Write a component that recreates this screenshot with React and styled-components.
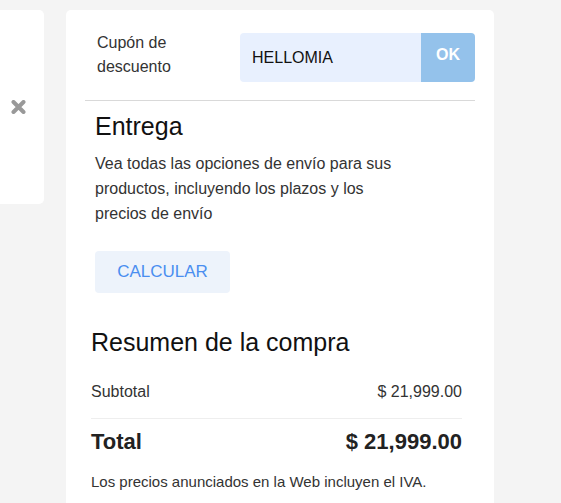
import React from "react"
import styled, { createGlobalStyle } from "styled-components"

const GlobalStyle = createGlobalStyle`
  html, body {
    margin: 0;
    padding: 0;
    overflow: hidden;
    background: #f4f4f4;
    font-family: "Liberation Sans", Arial, sans-serif;
  }
`

const Page = styled.div`
  display: flex;
  align-items: flex-start;
  gap: 22px;
  padding-top: 10px;
`

const SideCard = styled.div`
  width: 44px;
  height: 194px;
  background: #fff;
  border-radius: 0 5px 5px 0;
  display: flex;
  align-items: center;
  padding-left: 11px;
  box-sizing: border-box;
`

const Card = styled.div`
  width: 428px;
  background: #fff;
  border-radius: 5px 5px 0 0;
  padding: 23px 19px 20px;
  box-sizing: border-box;
  color: #333;
`

const CouponRow = styled.div`
  display: flex;
  align-items: flex-start;
  padding-left: 12px;
  padding-bottom: 18px;
  border-bottom: 1px solid #d9d9d9;
`

const CouponLabel = styled.label`
  width: 110px;
  margin-right: 33px;
  margin-top: -2px;
  font-size: 16px;
  line-height: 24px;
  color: #333;
`

const CouponInput = styled.div`
  flex: 1;
  height: 49px;
  display: flex;
  align-items: center;
  padding-left: 12px;
  background: #e8f0fe;
  border-radius: 4px 0 0 4px;
  font-size: 16px;
  color: #111;
`

const OkButton = styled.div`
  width: 54px;
  height: 49px;
  box-sizing: border-box;
  padding-bottom: 5px;
  display: flex;
  align-items: center;
  justify-content: center;
  background: #94c2eb;
  border-radius: 0 4px 4px 0;
  color: #fff;
  font-weight: bold;
  font-size: 16px;
  line-height: 16px;
`

const Section = styled.div`
  padding: ${p => p.$pad};
`

const Heading = styled.h2`
  margin: ${p => p.$margin};
  font-size: 25px;
  line-height: 30px;
  font-weight: normal;
  color: #111;
`

const Text = styled.p`
  margin: 0;
  max-width: 310px;
  font-size: 16px;
  line-height: 25px;
  color: #333;
`

const CalcButton = styled.div`
  display: inline-flex;
  align-items: center;
  justify-content: center;
  width: 135px;
  height: 42px;
  margin-top: 25px;
  background: #edf3fb;
  border-radius: 4px;
  color: #4a8ef0;
  font-size: 17px;
`

const Row = styled.div`
  display: flex;
  justify-content: space-between;
  font-size: ${p => (p.$total ? "22px" : "16px")};
  font-weight: ${p => (p.$total ? "bold" : "normal")};
  line-height: ${p => (p.$total ? "28px" : "24px")};
  color: ${p => (p.$total ? "#222" : "#333")};
  padding: ${p => (p.$total ? "9px 0 0" : "0 0 14px")};
  border-bottom: ${p => (p.$total ? "none" : "1px solid #eee")};
`

const Note = styled.p`
  margin: 15px 0 0;
  font-size: 15px;
  line-height: 21px;
  color: #333;
`

const CloseIcon = () => (
  <svg width="15" height="14" viewBox="0 0 15 14">
    <path
      d="M2.5 2 L12.5 12 M12.5 2 L2.5 12"
      stroke="#999"
      strokeWidth="4"
      strokeLinecap="round"
    />
  </svg>
)

const App = () => {
  return (
    <>
      <GlobalStyle />
      <Page>
        <SideCard>
          <CloseIcon />
        </SideCard>
        <Card>
          <CouponRow>
            <CouponLabel>Cupón de descuento</CouponLabel>
            <CouponInput>HELLOMIA</CouponInput>
            <OkButton>OK</OkButton>
          </CouponRow>

          <Section $pad="0 0 0 10px">
            <Heading $margin="10px 0 10px">Entrega</Heading>
            <Text>
              Vea todas las opciones de envío para sus productos, incluyendo
              los plazos y los precios de envío
            </Text>
            <CalcButton>CALCULAR</CalcButton>
          </Section>

          <Section $pad="0 13px 0 6px">
            <Heading $margin="34px 0 23px">Resumen de la compra</Heading>
            <Row>
              <span>Subtotal</span>
              <span>$ 21,999.00</span>
            </Row>
            <Row $total>
              <span>Total</span>
              <span>$ 21,999.00</span>
            </Row>
            <Note>Los precios anunciados en la Web incluyen el IVA.</Note>
          </Section>
        </Card>
      </Page>
    </>
  )
}

export default App
